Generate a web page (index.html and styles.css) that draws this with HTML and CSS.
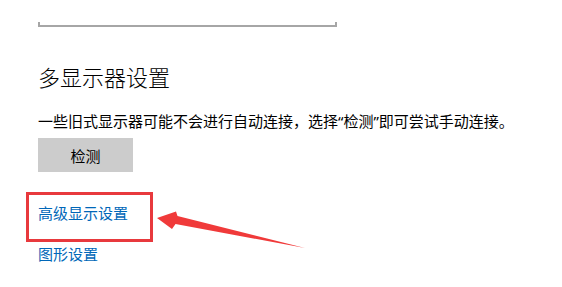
FILE: index.html
```html
<!DOCTYPE html>
<html lang="zh-CN">
<head>
<meta charset="utf-8">
<link rel="stylesheet" href="styles.css">
</head>
<body>
<div class="page">
  <div class="bracket"></div>
  <h2 class="heading">多显示器设置</h2>
  <p class="desc">一些旧式显示器可能不会进行自动连接，选择“检测”即可尝试手动连接。</p>
  <button class="btn">检测</button>
  <a class="link first">高级显示设置</a>
  <a class="link second">图形设置</a>
  <div class="highlight"></div>
  <svg class="arrow" width="562" height="287" viewBox="0 0 562 287">
    <polygon points="157,218 176,211.5 177.5,216 305,248 175.5,224 172,229" fill="#f03a3a"/>
  </svg>
</div>
</body>
</html>
```
FILE: styles.css
```css
html, body {
  margin: 0;
  padding: 0;
  background: #ffffff;
}
.page {
  position: relative;
  width: 562px;
  height: 287px;
  overflow: hidden;
  padding: 22px 0 0 38px;
  box-sizing: border-box;
  font-family: "Noto Sans", "Noto Sans CJK SC", sans-serif;
  display: flex;
  flex-direction: column;
  align-items: flex-start;
}
.bracket {
  width: 295px;
  height: 3px;
  border: 2px solid #a6a6a6;
  border-top: none;
}
.heading {
  margin: 35px 0 0 0;
  font-size: 22px;
  line-height: 30px;
  font-weight: 300;
  color: #000;
}
.desc {
  margin: 18px 0 0 0;
  font-size: 15px;
  line-height: 22px;
  color: #000;
  white-space: nowrap;
}
.btn {
  margin-top: 6px;
  width: 95px;
  height: 34px;
  padding: 0;
  border: none;
  background: #cccccc;
  font-family: inherit;
  font-size: 15px;
  color: #000;
}
.link {
  display: block;
  font-size: 15px;
  line-height: 22px;
  color: #0067b8;
  cursor: pointer;
}
.first {
  margin-top: 30px;
}
.second {
  margin-top: 19px;
}
.highlight {
  position: absolute;
  left: 26px;
  top: 192px;
  width: 127px;
  height: 50px;
  box-sizing: border-box;
  border: 3px solid #e8393d;
}
.arrow {
  position: absolute;
  left: 0;
  top: 0;
}
```
